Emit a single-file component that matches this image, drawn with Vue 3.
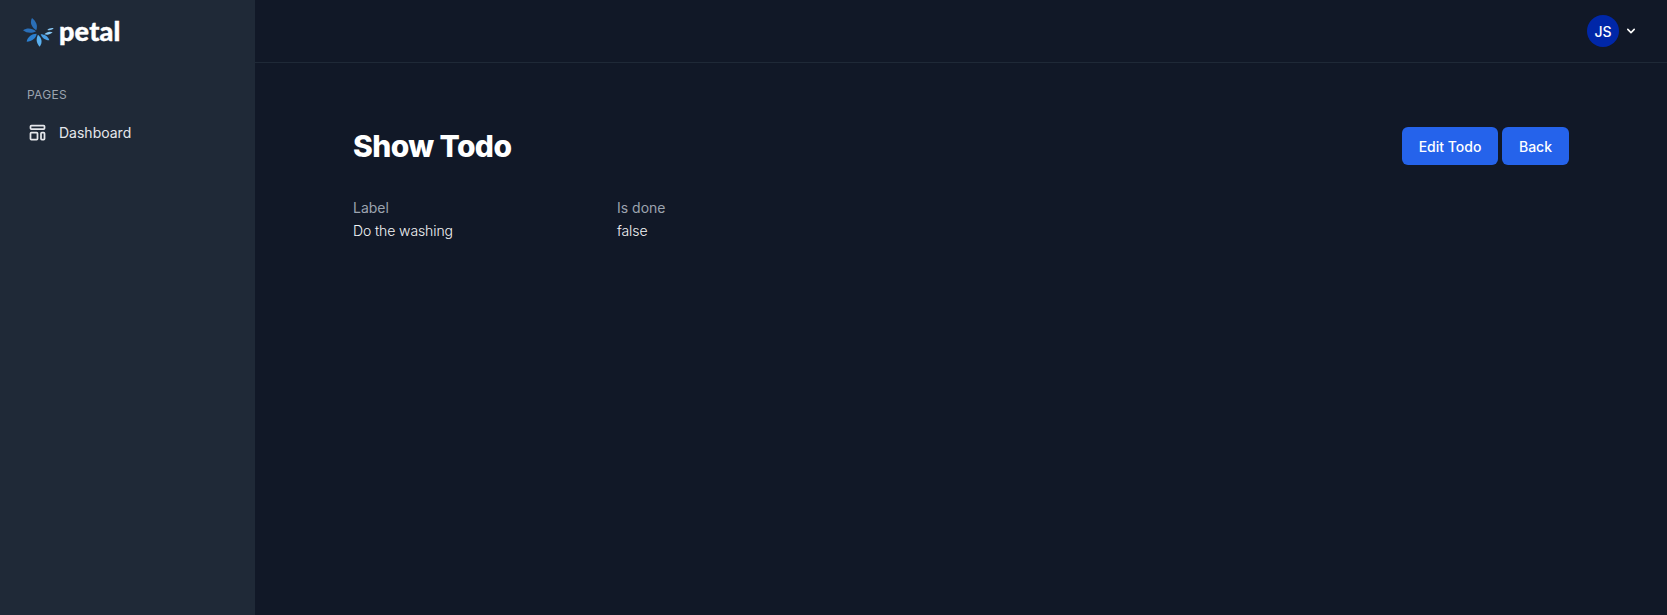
<template>
  <div class="layout">
    <aside class="sidebar">
      <div class="logo">
        <svg class="logo-mark" width="33" height="30" viewBox="66 50 99 90">
          <path fill="#2a6fb8" d="M96 53C88 68 96 82 109 90C114 75 108 62 96 53Z" />
          <path fill="#2a6fb8" d="M69 90C80 82 95 82 108 93C95 100 80 99 69 90Z" />
          <path fill="#2b7fcf" d="M80 124C82 110 95 100 110 100C108 114 96 122 80 124Z" />
          <path fill="#5ab0ef" d="M119 139C108 128 108 114 114 103C125 112 129 126 119 139Z" />
          <path fill="#4a9fe5" d="M148 120C138 121 126 114 122 102C134 102 144 108 148 120Z" />
          <path fill="#86c6f2" d="M158 96C150 104 142 104 133 102C140 94 150 92 158 96Z" />
          <path fill="#86c6f2" d="M161 84C155 90 148 91 142 89C147 84 155 82 161 84Z" />
        </svg>
        <span class="logo-text">petal</span>
      </div>
      <nav class="nav">
        <div class="nav-title">PAGES</div>
        <a class="nav-item">
          <svg width="21" height="21" viewBox="0 0 24 24" fill="none" stroke="currentColor" stroke-width="2" stroke-linecap="round" stroke-linejoin="round">
            <path d="M4 5a1 1 0 011-1h14a1 1 0 011 1v2a1 1 0 01-1 1H5a1 1 0 01-1-1V5zM4 13a1 1 0 011-1h6a1 1 0 011 1v6a1 1 0 01-1 1H5a1 1 0 01-1-1v-6zM16 13a1 1 0 011-1h2a1 1 0 011 1v6a1 1 0 01-1 1h-2a1 1 0 01-1-1v-6z" />
          </svg>
          <span>Dashboard</span>
        </a>
      </nav>
    </aside>

    <div class="main">
      <header class="topbar">
        <div class="avatar">JS</div>
        <svg class="chevron" width="16" height="16" viewBox="0 0 20 20" fill="currentColor">
          <path fill-rule="evenodd" clip-rule="evenodd" d="M5.293 7.293a1 1 0 011.414 0L10 10.586l3.293-3.293a1 1 0 111.414 1.414l-4 4a1 1 0 01-1.414 0l-4-4a1 1 0 010-1.414z" />
        </svg>
      </header>

      <main class="container">
        <div class="page-head">
          <h1>Show Todo</h1>
          <div class="actions">
            <button class="btn btn-edit">Edit Todo</button>
            <button class="btn btn-back">Back</button>
          </div>
        </div>
        <dl class="fields">
          <div v-for="field in fields" :key="field.label">
            <dt>{{ field.label }}</dt>
            <dd>{{ field.value }}</dd>
          </div>
        </dl>
      </main>
    </div>
  </div>
</template>

<script setup>
const fields = [
  { label: 'Label', value: 'Do the washing' },
  { label: 'Is done', value: 'false' },
]
</script>

<style>
html, body {
  margin: 0;
  background: #111827;
}
</style>

<style scoped>
.layout {
  display: flex;
  height: 615px;
  overflow: hidden;
  font-family: Inter, "Liberation Sans", sans-serif;
  color: #fff;
  background: #111827;
}

.sidebar {
  width: 255px;
  flex-shrink: 0;
  background: #1f2937;
}

.logo {
  height: 63px;
  display: flex;
  align-items: center;
  padding-left: 22px;
  gap: 4px;
}

.logo-text {
  font-family: Lato, sans-serif;
  font-weight: 900;
  font-size: 27px;
  line-height: 1;
  letter-spacing: 0.2px;
  margin-top: -2px;
  -webkit-text-stroke: 0.4px #fff;
}

.nav {
  padding: 24px 12px 0 27px;
}

.nav-title {
  font-size: 12px;
  line-height: 16px;
  color: #9ca3af;
  letter-spacing: 0.3px;
}

.nav-item {
  display: flex;
  align-items: center;
  gap: 11px;
  margin-top: 11px;
  padding: 8px 0;
  font-size: 14px;
  line-height: 20px;
  color: #e5e7eb;
}

.main {
  flex: 1;
  min-width: 0;
}

.topbar {
  height: 62px;
  display: flex;
  align-items: center;
  justify-content: flex-end;
  padding-right: 29px;
  border-bottom: 1px solid #1f2937;
}

.avatar {
  width: 32px;
  height: 32px;
  border-radius: 50%;
  background: #0027a8;
  display: flex;
  align-items: center;
  justify-content: center;
  font-size: 14px;
  font-weight: 500;
}

.chevron {
  margin-left: 4px;
  margin-right: -1px;
}

.container {
  max-width: 1216px;
  margin: 0 auto;
  padding-top: 64px;
}

.page-head {
  display: flex;
  align-items: center;
  justify-content: space-between;
}

h1 {
  margin: 0;
  font-size: 30px;
  line-height: 38px;
  font-weight: 800;
  letter-spacing: -0.6px;
}

.actions {
  display: flex;
  gap: 4px;
}

.btn {
  height: 38px;
  padding: 0;
  border: none;
  border-radius: 6px;
  background: #2563eb;
  color: #fff;
  font-family: inherit;
  font-size: 14px;
  font-weight: 500;
}

.btn-edit {
  width: 96px;
}

.btn-back {
  width: 67px;
}

.fields {
  display: grid;
  grid-template-columns: repeat(2, 264px);
  margin: 33px 0 0;
}

dt {
  font-size: 14px;
  line-height: 20px;
  color: #9ca3af;
}

dd {
  margin: 3px 0 0;
  font-size: 14px;
  line-height: 20px;
  font-weight: 300;
  letter-spacing: -0.1px;
  color: #f3f4f6;
}
</style>
